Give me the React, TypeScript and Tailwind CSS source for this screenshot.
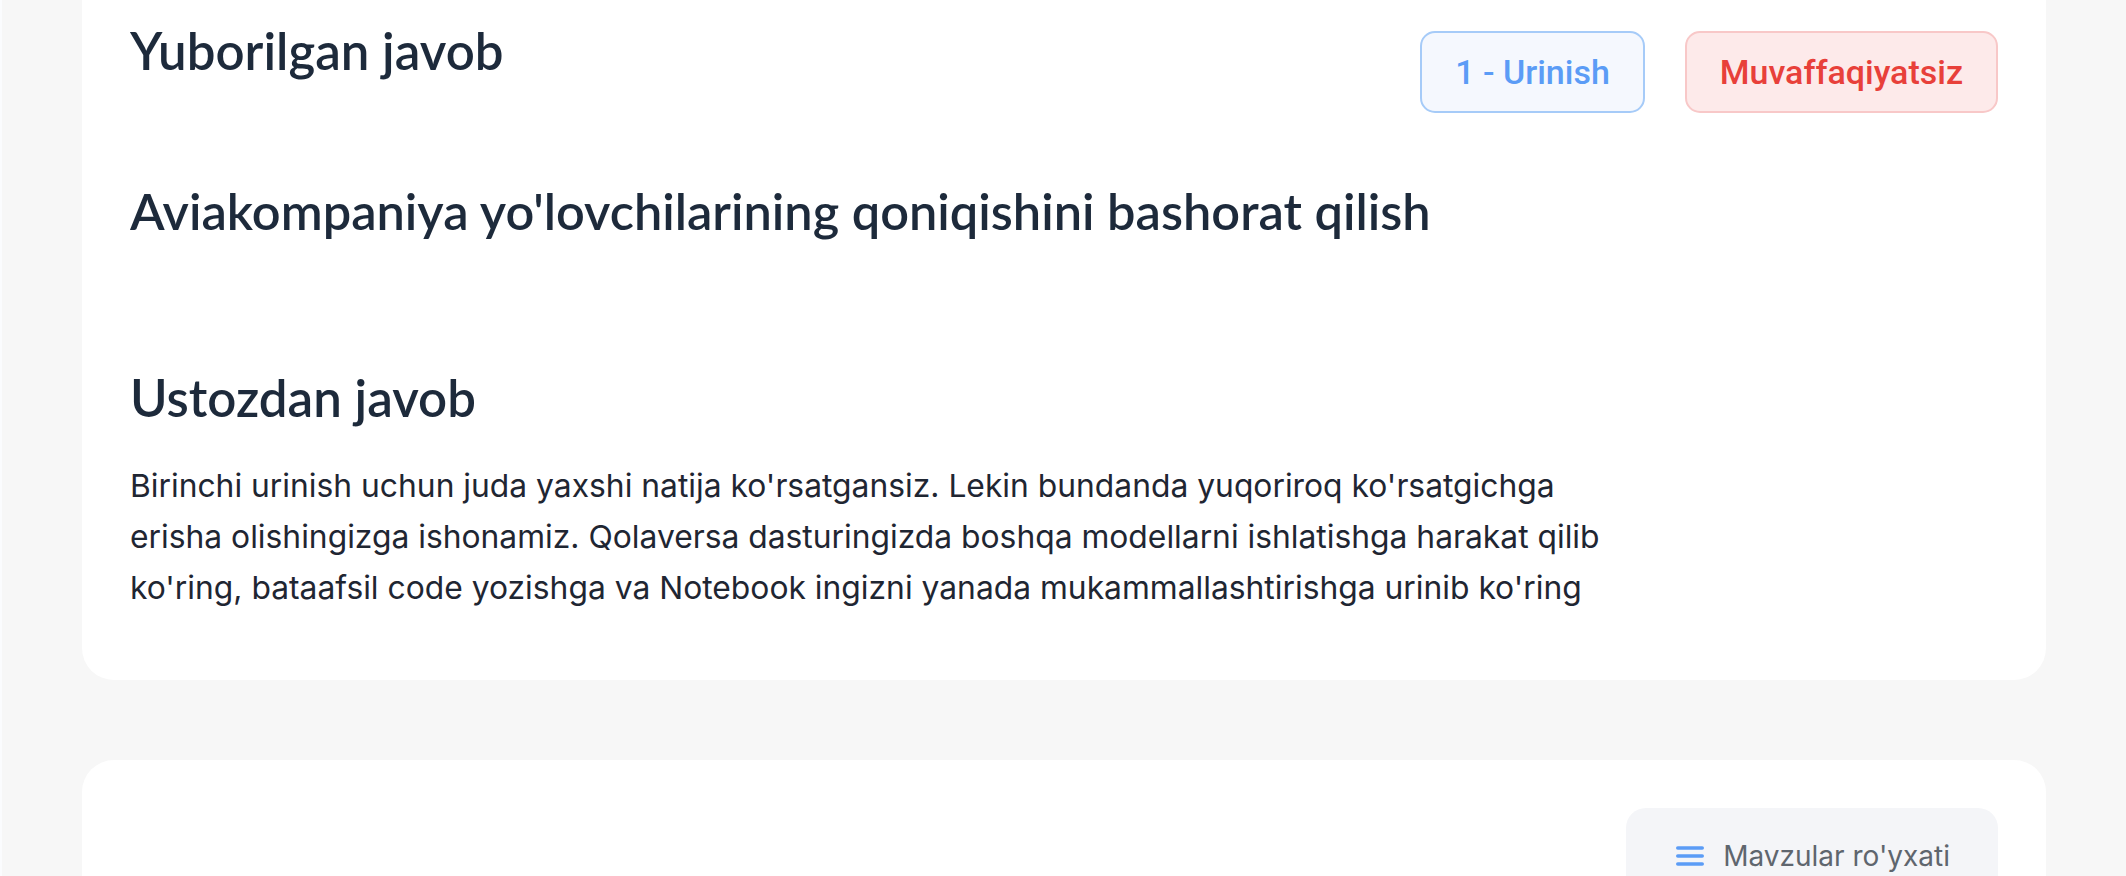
import React from "react";

function MenuIcon() {
  return (
    <svg width="28" height="20" viewBox="0 0 28 20" fill="none" aria-hidden="true">
      <line x1="1.75" y1="2" x2="26.25" y2="2" stroke="#5b9cf6" strokeWidth="3.5" strokeLinecap="round" />
      <line x1="1.75" y1="10" x2="26.25" y2="10" stroke="#5b9cf6" strokeWidth="3.5" strokeLinecap="round" />
      <line x1="1.75" y1="18" x2="26.25" y2="18" stroke="#5b9cf6" strokeWidth="3.5" strokeLinecap="round" />
    </svg>
  );
}

export default function App() {
  return (
    <div className="h-[876px] w-full overflow-hidden bg-[#f7f7f7] flex">
      <div className="w-[2px] bg-[#fbfcfe] shrink-0" />
      <div className="flex-1 px-[80px] flex flex-col gap-[80px]">
        {/* Card 1 */}
        <section className="bg-white rounded-b-[32px] pt-[21px] pb-[67px] px-12">
          <div className="flex justify-between items-start">
            <h2 className="font-[Lato,sans-serif] font-semibold text-[51px] leading-[60px] text-[#1d2a3b]">
              Yuborilgan javob
            </h2>
            <div className="flex gap-[40px] mt-[10px]">
              <div className="h-[82px] px-[33px] flex items-center rounded-[15px] border-2 border-[#a6cbf8] bg-[#f5f8fe] font-[Roboto,sans-serif] font-medium text-[34px] text-[#5b9cf6]">
                1 - Urinish
              </div>
              <div className="h-[82px] px-[33px] flex items-center rounded-[15px] border-2 border-[#f8c8c8] bg-[#fdeaea] font-[Roboto,sans-serif] font-medium text-[34px] text-[#e8403a]">
                Muvaffaqiyatsiz
              </div>
            </div>
          </div>
          <h2 className="mt-[68px] font-[Lato,sans-serif] font-semibold text-[50.5px] leading-[60px] text-[#1d2a3b]">
            Aviakompaniya yo'lovchilarining qoniqishini bashorat qilish
          </h2>
          <h2 className="mt-[127px] font-[Lato,sans-serif] font-semibold text-[51px] leading-[60px] text-[#1d2a3b]">
            Ustozdan javob
          </h2>
          <p className="mt-[32px] max-w-[1600px] font-[Inter,sans-serif] text-[31.8px] leading-[51px] text-[#1f2632]">
            Birinchi urinish uchun juda yaxshi natija ko'rsatgansiz. Lekin bundanda yuqoriroq ko'rsatgichga
            <br />
            erisha olishingizga ishonamiz. Qolaversa dasturingizda boshqa modellarni ishlatishga harakat qilib
            <br />
            ko'ring, bataafsil code yozishga va Notebook ingizni yanada mukammallashtirishga urinib ko'ring
          </p>
        </section>

        {/* Card 2 */}
        <section className="flex-1 bg-white rounded-t-[32px] pt-12 px-12 flex justify-end items-start">
          <button className="h-[96px] pl-[50px] pr-[48px] rounded-[20px] bg-[#f4f5f8] flex items-center gap-[19px] font-[Inter,sans-serif] text-[28px] text-[#5f666e]">
            <MenuIcon />
            <span>Mavzular ro'yxati</span>
          </button>
        </section>
      </div>
    </div>
  );
}
